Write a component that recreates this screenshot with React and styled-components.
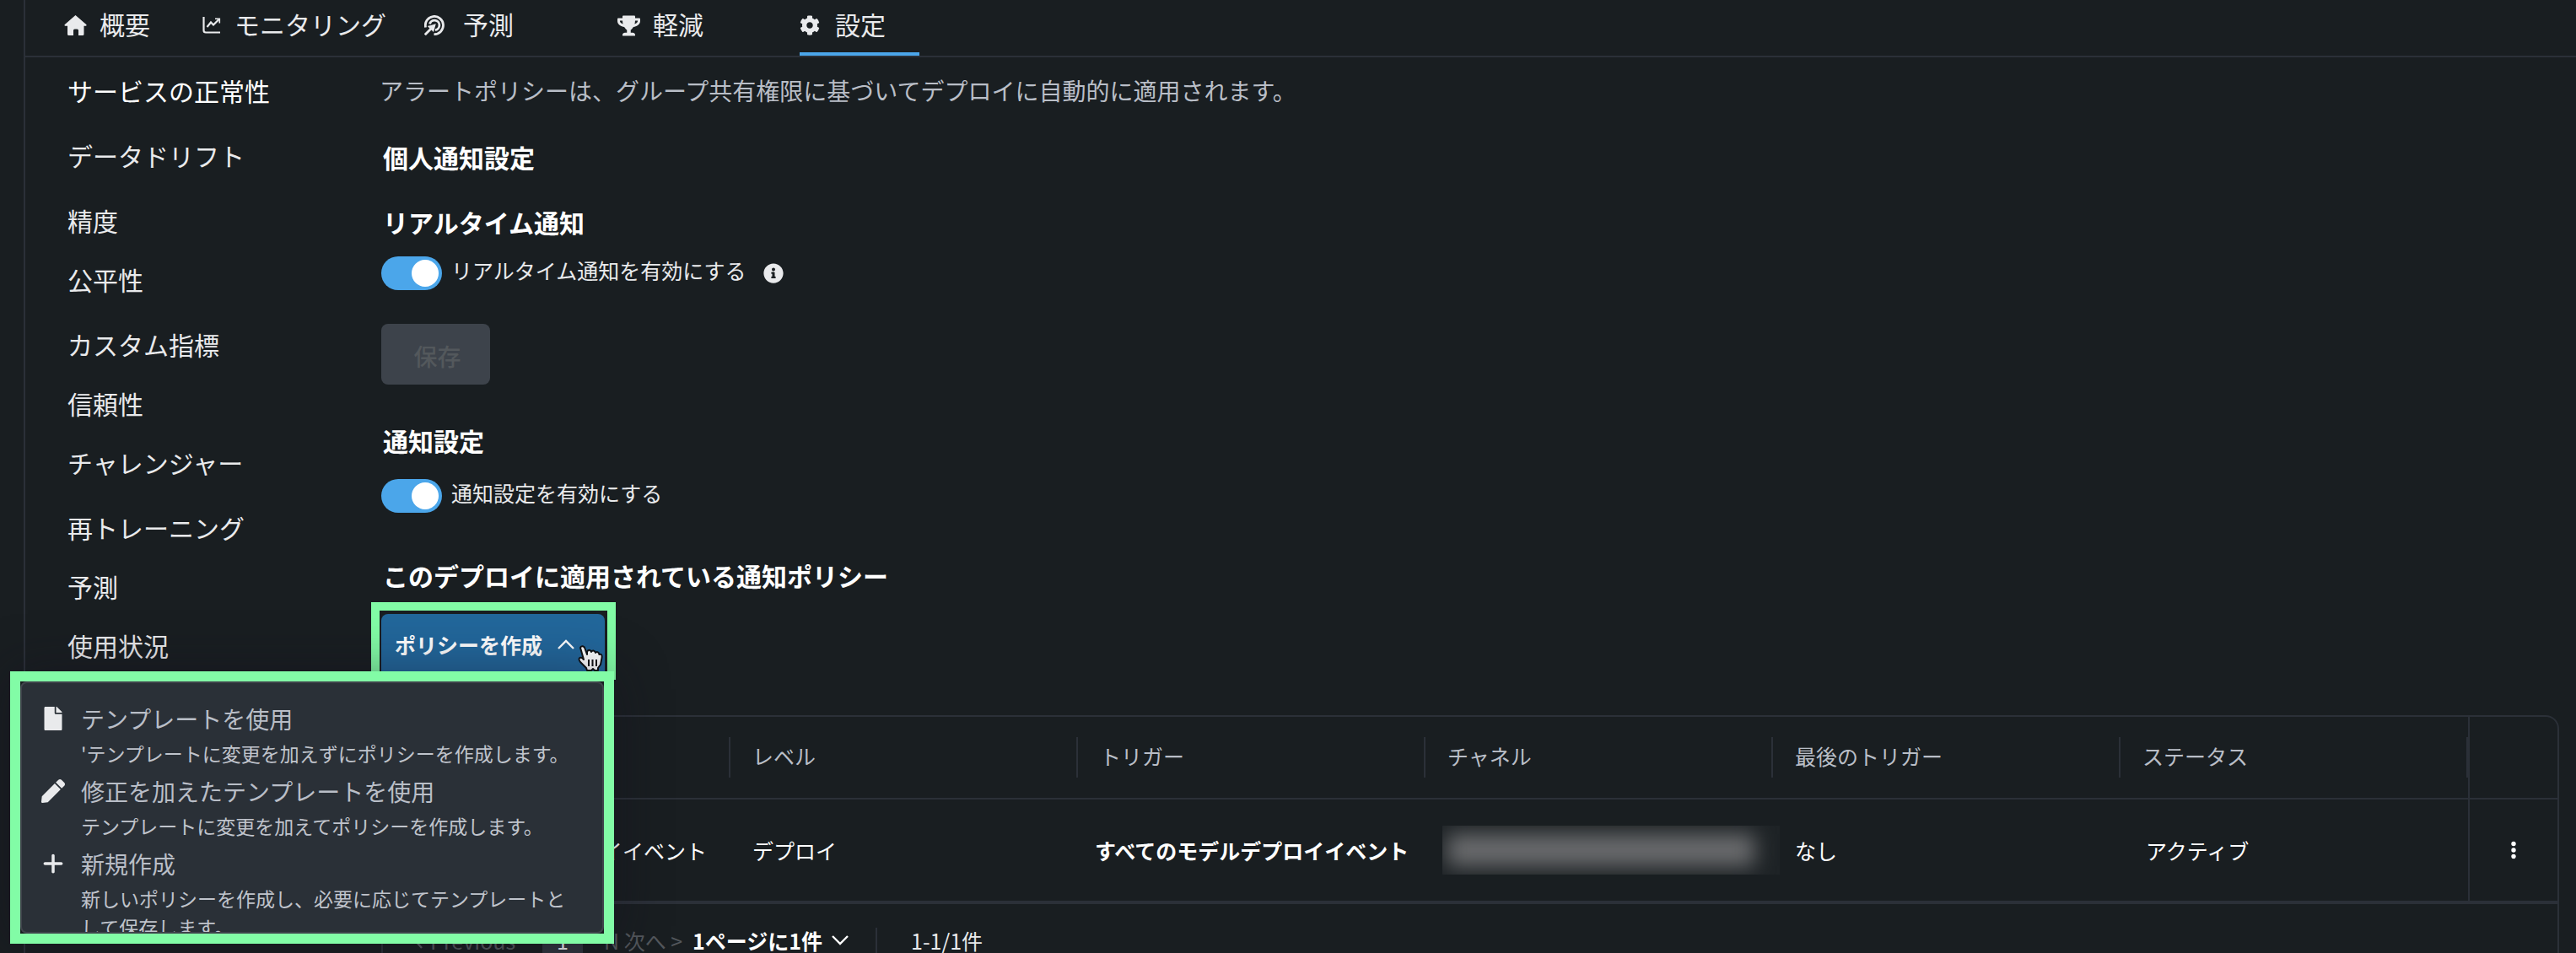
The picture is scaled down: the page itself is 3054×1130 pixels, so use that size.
import { useState } from 'react';
import styled, { createGlobalStyle } from 'styled-components';
import { FaCog, FaFile, FaInfoCircle, FaPen, FaTrophy } from 'react-icons/fa';
import { FaPlus } from 'react-icons/fa6';

const GlobalStyle = createGlobalStyle`
	* {
		box-sizing: border-box;
	}
	body {
		margin: 0;
		background: #191e21;
		color: #e9eaec;
		font-family: 'Noto Sans CJK JP', 'Noto Sans', sans-serif;
		font-size: 25px;
	}
	button, select, input {
		font-family: inherit;
	}
`;

const Page = styled.div`
	display: flex;
	flex-direction: column;
	min-height: 100vh;
	margin-left: 28px;
	border-left: 2px solid #2b3038;
`;

const Tabs = styled.nav`
	display: grid;
	grid-template-columns: 164px 263px 229px 216px 142px;
	padding-left: 46px;
	border-bottom: 2px solid #2b3038;
`;

const Tab = styled.a`
	display: flex;
	align-items: center;
	gap: 14px;
	height: 66px;
	border-top: 0;
	border-bottom: 4px solid ${({ $active }) => ($active ? '#4ba6ea' : 'transparent')};
	color: #e9eaec;
	font-size: 30px;
	line-height: 40px;
	text-decoration: none;
`;

const TabIcon = styled.span`
	display: flex;
	flex: none;
	width: ${({ $width }) => $width}px;
	padding-bottom: 2px;
`;

const TabLabel = styled.span`
	padding-bottom: 6px;
`;

const Body = styled.div`
	display: flex;
	flex: 1;
`;

const Sidebar = styled.ul`
	flex: none;
	width: 422px;
	margin: 0;
	padding: 19px 0 0 50px;
	list-style: none;
`;

const SidebarItem = styled.li`
	margin-bottom: ${({ $wide }) => ($wide ? 37 : 30)}px;
	font-size: 30px;
	line-height: 40px;
`;

const SidebarLink = styled.a`
	color: ${({ $active }) => ($active ? '#ffffff' : '#e9eaec')};
	text-decoration: none;
`;

const Main = styled.main`
	display: flex;
	flex: 1;
	flex-direction: column;
	align-items: flex-start;
	min-width: 0;
	padding: 19px 20px 0 0;
`;

const Intro = styled.p`
	margin: 0 0 39px -2px;
	color: #b9bec7;
	font-size: 28px;
	line-height: 40px;
`;

const Title = styled.h2`
	margin: 0 0 ${({ $space }) => $space}px;
	padding-left: 2px;
	color: #ffffff;
	font-size: 30px;
	font-weight: 700;
	line-height: 40px;
`;

const SwitchRow = styled.div`
	display: flex;
	align-items: center;
	height: 40px;
	margin-bottom: ${({ $space }) => $space}px;
`;

const Switch = styled.input`
	appearance: none;
	display: flex;
	width: 72px;
	height: 40px;
	margin: 0 11px 0 0;
	padding: 4px;
	justify-content: ${({ checked }) => (checked ? 'flex-end' : 'flex-start')};
	border-radius: 20px;
	background: ${({ checked }) => (checked ? '#4ba6ea' : '#3d434b')};
	cursor: pointer;

	&::before {
		content: '';
		width: 32px;
		height: 32px;
		border-radius: 50%;
		background: #ffffff;
	}
`;

const SwitchLabel = styled.label`
	padding-bottom: 8px;
	margin-right: 20px;
	font-size: 25px;
	line-height: 32px;
`;

const SaveButton = styled.button`
	width: 129px;
	height: 72px;
	margin-bottom: 46px;
	padding: 4px 0 0 4px;
	border: 0;
	border-radius: 8px;
	background: #3d434b;
	color: #53585c;
	font-size: 28px;
	font-weight: 500;
`;

const Highlight = styled.div`
	position: relative;
	width: 290px;
	margin: 0 0 42px -12px;
	padding: 4px 3px 0 2px;
	border: 10px solid #82fca6;
`;

const CreateButton = styled.button`
	display: flex;
	align-items: center;
	gap: 18px;
	width: 100%;
	height: 68px;
	padding: 4px 0 0 16px;
	border: 0;
	border-radius: 8px 8px 0 0;
	background: #22679b;
	color: #ffffff;
	font-size: 25px;
	font-weight: 700;
`;

const Pointer = styled.svg`
	position: absolute;
	right: 5px;
	bottom: 0;
`;

const Menu = styled.div`
	position: absolute;
	z-index: 1;
	top: 72px;
	left: -438px;
	width: 716px;
	height: 323px;
	border: 12px solid #82fca6;
	background: #191e21;
	box-shadow: 0 0 60px rgba(20, 16, 30, 0.4);
`;

const MenuPanel = styled.div`
	display: flex;
	flex-direction: column;
	gap: 4px;
	height: 100%;
	padding: 18px 32px 0 23px;
	overflow: hidden;
	border: 2px solid #3f434b;
	border-radius: 8px;
	background: #2a3037;
`;

const MenuItem = styled.button`
	display: grid;
	flex: none;
	grid-template-columns: 47px 1fr;
	padding: 0;
	border: 0;
	background: none;
	text-align: left;
	cursor: pointer;
`;

const MenuIcon = styled.span`
	display: flex;
	align-items: center;
	justify-content: center;
	width: 28px;
	height: 48px;
	color: #e9eaec;
`;

const MenuTitle = styled.span`
	color: #b9bec7;
	font-size: 28px;
	line-height: 48px;
`;

const MenuText = styled.span`
	grid-column: 2;
	color: #c0c4cc;
	font-size: 23px;
	line-height: 34px;
`;

const TableCard = styled.section`
	display: flex;
	flex: 1;
	flex-direction: column;
	width: 100%;
	border: 2px solid #2b3038;
	border-bottom: 0;
	border-radius: 16px 16px 0 0;
`;

const PolicyTable = styled.table`
	width: 100%;
	table-layout: fixed;
	border-spacing: 0;
`;

const HeadCell = styled.th`
	height: 98px;
	padding: 0;
	border-bottom: 2px solid #2b3038;
	color: #b9bec7;
	font-weight: 400;
	text-align: left;
`;

const HeadLabel = styled.div`
	height: 48px;
	padding-left: 26px;
	border-right: 2px solid #2b3038;
	line-height: 44px;
`;

const ActionHead = styled(HeadCell)`
	width: 106px;
	border-left: 2px solid #2b3038;
`;

const Cell = styled.td`
	height: 124px;
	padding: 0 28px 0 ${({ $left }) => $left || 26}px;
	border-bottom: 4px solid #2b3038;
	color: #ffffff;
	font-weight: ${({ $bold }) => ($bold ? 700 : 400)};
	line-height: 32px;
	text-align: ${({ $right }) => ($right ? 'right' : 'left')};
	white-space: nowrap;
`;

const ActionCell = styled(Cell)`
	padding: 0;
	border-left: 2px solid #2b3038;
	text-align: center;
`;

const MoreButton = styled.button`
	padding: 12px 16px 8px;
	border: 0;
	background: none;
	cursor: pointer;
`;

const Redacted = styled.div`
	width: 400px;
	height: 58px;
	padding: 10px 30px 8px 6px;
	overflow: hidden;
	background: #1e2326;
`;

const RedactedInk = styled.div`
	height: 38px;
	background: #6b6c6e;
	filter: blur(12px);
`;

const Pagination = styled.div`
	display: flex;
	padding: 28px 0 0 36px;
	line-height: 30px;
`;

const PageStep = styled.button`
	display: flex;
	align-items: center;
	gap: 9px;
	width: ${({ $width }) => $width}px;
	padding: 0;
	border: 0;
	background: none;
	color: #53575c;
	font-size: 25px;
	line-height: 30px;
	text-align: left;
	white-space: nowrap;
`;

const PageNumber = styled.button`
	width: 48px;
	margin: 0 25px;
	padding: 0;
	border: 0;
	background: #2f353d;
	color: #e9eaec;
	font-size: 25px;
	line-height: 30px;
`;

const PageSize = styled.div`
	display: flex;
	align-items: center;
	gap: 10px;
	margin: 0 32px 0 17px;
`;

const PageSizeSelect = styled.select`
	appearance: none;
	height: 30px;
	padding: 0;
	border: 0;
	background: none;
	color: #ffffff;
	font-size: 25px;
	font-weight: 700;
	line-height: 30px;
`;

const PageRange = styled.div`
	padding-left: 40px;
	border-left: 2px solid #2b3038;
`;

const HomeIcon = () => (
	<svg width="27" height="24" viewBox="0 0 27 24" fill="#e9eaec">
		<path d="M13.500 0 L26.500 11.300 Q27 12.500 25.800 12.800 H23.500 V22.500 Q23.500 24 22 24 H17 V18 Q17 16.500 15.500 16.500 H12.500 Q11 16.500 11 18 V24 H5.500 Q4 24 4 22.500 V12.800 H1.300 Q0 12.500 0.600 11.300 Z" />
	</svg>
);

const ChartIcon = () => (
	<svg width="22" height="22" viewBox="0 0 22 22" fill="none" stroke="#e9eaec" strokeWidth="2.200">
		<path d="M1.500 1 V17 Q1.500 19.500 4 19.500 H21" />
		<path d="M5.500 13 L10 7.500 L13 10.500 L19.500 4" />
		<path d="M15 3.200 H20.300 V8.500" strokeWidth="1.600" />
	</svg>
);

const TargetIcon = () => (
	<svg width="24" height="24" viewBox="0 0 24 24" fill="none" stroke="#e9eaec" strokeWidth="2.800">
		<path d="M1.600 14.500 A10.600 10.600 0 1 1 11.500 22.600" />
		<path d="M6.500 10.500 A5.800 5.800 0 1 1 13 17.600" />
		<path d="M0.800 23.200 L8 16" />
		<path d="M13.800 10.200 L11 20 L8.200 17.200 L6.500 15.800 L3.800 13 Z" fill="#e9eaec" stroke="none" />
	</svg>
);

const Chevron = ({ up }) => (
	<svg width="20" height="12" viewBox="0 0 20 12" fill="none" stroke="#ffffff" strokeWidth="2.400">
		<path d={up ? 'M1 11 L10 2 L19 11' : 'M1 1 L10 10 L19 1'} />
	</svg>
);

const BackIcon = () => (
	<svg width="11" height="20" viewBox="0 0 11 20" fill="none" stroke="#53575c" strokeWidth="2.400">
		<path d="M10 1 L2 10 L10 19" />
	</svg>
);

const DotsIcon = () => (
	<svg width="6" height="22" viewBox="0 0 6 22" fill="#ffffff">
		<circle cx="3" cy="3.500" r="2.700" />
		<circle cx="3" cy="11" r="2.700" />
		<circle cx="3" cy="18.500" r="2.700" />
	</svg>
);

const tabs = [
	{ label: '概要', icon: <HomeIcon />, width: 28 },
	{ label: 'モニタリング', icon: <ChartIcon />, width: 24 },
	{ label: '予測', icon: <TargetIcon />, width: 32 },
	{ label: '軽減', icon: <FaTrophy size={27} />, width: 28 },
	{ label: '設定', icon: <FaCog size={24} />, width: 28, active: true },
];

const sections = [
	{ label: 'サービスの正常性', wide: true, active: true },
	{ label: 'データドリフト', wide: true },
	{ label: '精度' },
	{ label: '公平性', wide: true },
	{ label: 'カスタム指標' },
	{ label: '信頼性' },
	{ label: 'チャレンジャー', wide: true },
	{ label: '再トレーニング' },
	{ label: '予測' },
	{ label: '使用状況' },
];

const menuItems = [
	{
		title: 'テンプレートを使用',
		text: "'テンプレートに変更を加えずにポリシーを作成します。",
		icon: <FaFile size={28} />,
	},
	{
		title: '修正を加えたテンプレートを使用',
		text: 'テンプレートに変更を加えてポリシーを作成します。',
		icon: <FaPen size={28} />,
	},
	{
		title: '新規作成',
		text: '新しいポリシーを作成し、必要に応じてテンプレートとして保存します。',
		icon: <FaPlus size={28} />,
	},
];

const columns = ['名前', 'レベル', 'トリガー', 'チャネル', '最後のトリガー', 'ステータス'];

function App() {
	const [realtime, setRealtime] = useState(true);
	const [notifications, setNotifications] = useState(true);
	const [open, setOpen] = useState(true);

	return (
		<>
			<GlobalStyle />
			<Page>
				<Tabs>
					{tabs.map((tab) => (
						<Tab key={tab.label} href="#" $active={tab.active}>
							<TabIcon $width={tab.width}>{tab.icon}</TabIcon>
							<TabLabel>{tab.label}</TabLabel>
						</Tab>
					))}
				</Tabs>
				<Body>
					<Sidebar>
						{sections.map((item) => (
							<SidebarItem key={item.label} $wide={item.wide}>
								<SidebarLink href="#" $active={item.active}>{item.label}</SidebarLink>
							</SidebarItem>
						))}
					</Sidebar>
					<Main>
						<Intro>アラートポリシーは、グループ共有権限に基づいてデプロイに自動的に適用されます。</Intro>
						<Title $space={37}>個人通知設定</Title>
						<Title $space={21}>リアルタイム通知</Title>
						<SwitchRow $space={40}>
							<Switch id="realtime" type="checkbox" checked={realtime} onChange={() => setRealtime(!realtime)} />
							<SwitchLabel htmlFor="realtime">リアルタイム通知を有効にする</SwitchLabel>
							<FaInfoCircle size={24} />
						</SwitchRow>
						<SaveButton disabled>保存</SaveButton>
						<Title $space={26}>通知設定</Title>
						<SwitchRow $space={54}>
							<Switch id="notifications" type="checkbox" checked={notifications} onChange={() => setNotifications(!notifications)} />
							<SwitchLabel htmlFor="notifications">通知設定を有効にする</SwitchLabel>
						</SwitchRow>
						<Title $space={12}>このデプロイに適用されている通知ポリシー</Title>
						<Highlight>
							<CreateButton onClick={() => setOpen(!open)}>
								ポリシーを作成
								<Chevron up={open} />
							</CreateButton>
							<Pointer width="30" height="31" viewBox="0 0 30 31" fill="#ffffff" stroke="#101214" strokeWidth="2" strokeLinejoin="round">
								<path d="M3 3 C4 0 8 1 8.500 4 L11 11 V8 C12 5 15 5 16 8 C17 5.500 20 6 21 9 C22 7 25 8 25.500 11 C28 10 29 12 28.500 15 L27 23 L24 27 V30 H20 L18 28 L16 30 H11 L10 27 L3 20 C0 16 2 14 5 15 L7 17 Z" />
								<path d="M13 17 V25 M17.500 17 V25 M22 17 V25" fill="none" />
							</Pointer>
							{open && (
								<Menu>
									<MenuPanel>
										{menuItems.map((item) => (
											<MenuItem key={item.title}>
												<MenuIcon>{item.icon}</MenuIcon>
												<MenuTitle>{item.title}</MenuTitle>
												<MenuText>{item.text}</MenuText>
											</MenuItem>
										))}
									</MenuPanel>
								</Menu>
							)}
						</Highlight>
						<TableCard>
							<PolicyTable>
								<thead>
									<tr>
										{columns.map((name) => (
											<HeadCell key={name}>
												<HeadLabel>{name}</HeadLabel>
											</HeadCell>
										))}
										<ActionHead />
									</tr>
								</thead>
								<tbody>
									<tr>
										<Cell $right>すべてのデプロイイベント</Cell>
										<Cell>デプロイ</Cell>
										<Cell $bold $left={20}>すべてのモデルデプロイイベント</Cell>
										<Cell $left={20}>
											<Redacted>
												<RedactedInk />
											</Redacted>
										</Cell>
										<Cell>なし</Cell>
										<Cell $left={30}>アクティブ</Cell>
										<ActionCell>
											<MoreButton aria-label="その他">
												<DotsIcon />
											</MoreButton>
										</ActionCell>
									</tr>
								</tbody>
							</PolicyTable>
							<Pagination>
								<PageStep $width={128} disabled>
									<BackIcon />
									Previous
								</PageStep>
								<PageNumber>1</PageNumber>
								<PageStep $width={88} disabled>N 次へ &gt;</PageStep>
								<PageSize>
									<PageSizeSelect aria-label="表示件数">
										<option>1ページに1件</option>
									</PageSizeSelect>
									<Chevron />
								</PageSize>
								<PageRange>1-1/1件</PageRange>
							</Pagination>
						</TableCard>
					</Main>
				</Body>
			</Page>
		</>
	);
}

export default App;
